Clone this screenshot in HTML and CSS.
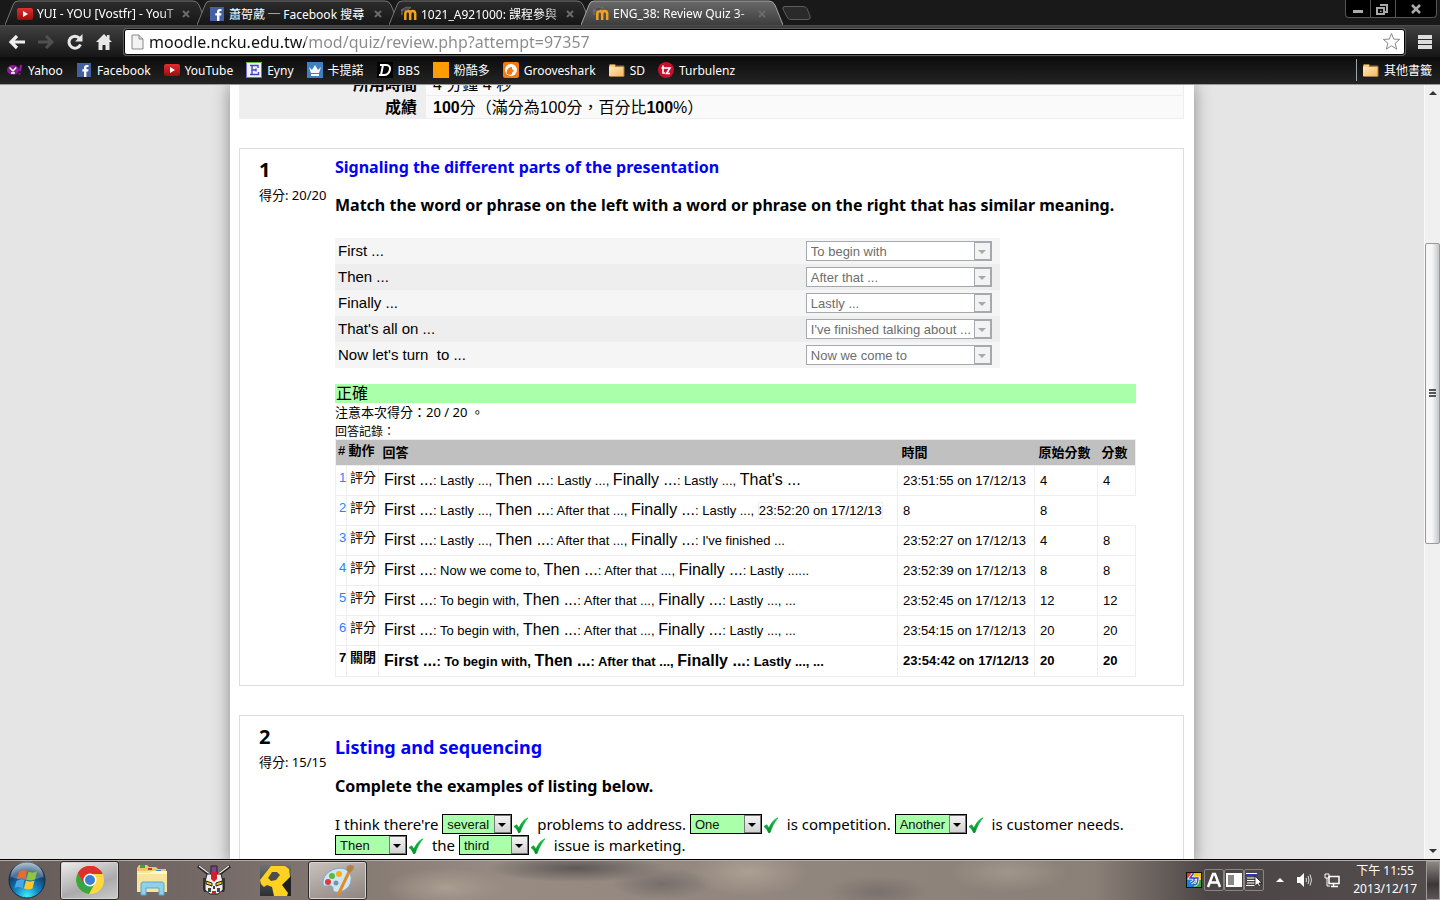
FILE: index.html
```html
<!DOCTYPE html>
<html lang="zh-Hant">
<head>
<meta charset="utf-8">
<title>ENG_38: Review Quiz 3</title>
<link rel="stylesheet" href="styles.css">
</head>
<body>
<svg class="defs" width="0" height="0" aria-hidden="true">
  <defs>
    <linearGradient id="gTab" x1="0" y1="0" x2="0" y2="1"><stop offset="0" stop-color="#2c2c2c"/><stop offset="1" stop-color="#161616"/></linearGradient>
    <linearGradient id="gActive" x1="0" y1="0" x2="0" y2="1"><stop offset="0" stop-color="#6a6a6a"/><stop offset="1" stop-color="#3d3d3d"/></linearGradient>
    <linearGradient id="gRed" x1="0" y1="0" x2="0" y2="1"><stop offset="0" stop-color="#e02f2f"/><stop offset="1" stop-color="#9c0d0d"/></linearGradient>
    <linearGradient id="gFolder" x1="0" y1="0" x2="1" y2="1"><stop offset="0" stop-color="#ffe9b8"/><stop offset="1" stop-color="#f5b95f"/></linearGradient>
    <radialGradient id="gOrb" cx=".5" cy=".95" r=".95"><stop offset="0" stop-color="#3ff0ff"/><stop offset=".35" stop-color="#1287c4"/><stop offset=".7" stop-color="#123f6d"/><stop offset="1" stop-color="#9fb8c8"/></radialGradient>
    <linearGradient id="gP" x1="0" y1="0" x2="0" y2="1"><stop offset="0" stop-color="#6d6f70"/><stop offset="1" stop-color="#2c2f31"/></linearGradient>
    <linearGradient id="gTick" x1="0" y1="0" x2="0" y2="1"><stop offset="0" stop-color="#17c34a"/><stop offset="1" stop-color="#008f25"/></linearGradient>
    <symbol id="youtube" viewBox="0 0 16 16"><rect y="2" width="16" height="12" rx="2" fill="url(#gRed)"/><path d="M6 5l5 3-5 3z" fill="#fff"/></symbol>
    <symbol id="facebook" viewBox="0 0 16 16"><rect x="1" y="1" width="14" height="14" fill="#4460a0"/><path d="M8 15V9.500H6.300V7.300H8V5.800C8 3.900 9.200 3 10.800 3h1.700v2.100h-1.100c-.8 0-1 .4-1 1v1.200h2.100l-.3 2.200h-1.800V15z" fill="#fff"/></symbol>
    <symbol id="moodle" viewBox="0 0 16 16"><path d="M4.300 14V8M9.200 14V8q0-3-2.400-3T4.300 8M9.200 8q0-3 2.500-3t2.500 3v6" fill="none" stroke="#f7a01c" stroke-width="2.500"/><path d="M0 4l5-3 5 .5L6 4.500z" fill="#4a4a4a" stroke="#808080" stroke-width=".6"/><path d="M1 4v5" stroke="#808080"/></symbol>
    <symbol id="folder" viewBox="0 0 16 16"><path d="M0 3l1-1h5l1 1.500h7.500l1 1V14l-1 1H1l-1-1z" fill="#a87942"/><path d="M0 5h14.500v9H0z" fill="url(#gFolder)"/><path d="M1 3h5v2H0z" fill="#f9cd83"/></symbol>
    <symbol id="tick" viewBox="0 0 16 16"><path d="M1 9.500L3.600 7.800 6 11C8 6 11 2.500 15 .8 11.500 5 9 9.500 7 15.500L5.500 15.700C4.500 13 3 10.800 1 9.500z" fill="url(#gTick)" stroke="url(#gTick)" stroke-width=".8"/></symbol>
  </defs>
</svg>

<header class="browser">
  <nav class="tabs" aria-label="Tabs">
    <div class="tab"><svg class="shape" viewBox="0 0 202 25" preserveAspectRatio="none"><path d="M0 25L8 5Q9 1 13 1H188Q192 1 194 5L202 25" fill="url(#gTab)" stroke="#757575"/></svg><svg class="ico"><use href="#youtube"/></svg><span class="tab-name">YUI - YOU [Vostfr] - YouT</span><button class="close" aria-label="Close"><svg width="8" height="8" viewBox="0 0 8 8"><path d="M1 1l6 6M7 1L1 7"/></svg></button></div>
    <div class="tab"><svg class="shape" viewBox="0 0 202 25" preserveAspectRatio="none"><path d="M0 25L8 5Q9 1 13 1H188Q192 1 194 5L202 25" fill="url(#gTab)" stroke="#757575"/></svg><svg class="ico"><use href="#facebook"/></svg><span class="tab-name whole">蕭哿葳 ─ Facebook 搜尋</span><button class="close" aria-label="Close"><svg width="8" height="8" viewBox="0 0 8 8"><path d="M1 1l6 6M7 1L1 7"/></svg></button></div>
    <div class="tab"><svg class="shape" viewBox="0 0 202 25" preserveAspectRatio="none"><path d="M0 25L8 5Q9 1 13 1H188Q192 1 194 5L202 25" fill="url(#gTab)" stroke="#757575"/></svg><svg class="ico"><use href="#moodle"/></svg><span class="tab-name">1021_A921000: 課程參與</span><button class="close" aria-label="Close"><svg width="8" height="8" viewBox="0 0 8 8"><path d="M1 1l6 6M7 1L1 7"/></svg></button></div>
    <div class="tab active"><svg class="shape" viewBox="0 0 202 25" preserveAspectRatio="none"><path d="M0 25L8 5Q9 1 13 1H188Q192 1 194 5L202 25" fill="url(#gActive)" stroke="#a5a5a5"/></svg><svg class="ico"><use href="#moodle"/></svg><span class="tab-name">ENG_38: Review Quiz 3-</span><button class="close" aria-label="Close"><svg width="8" height="8" viewBox="0 0 8 8"><path d="M1 1l6 6M7 1L1 7"/></svg></button></div>
    <button class="new-tab" aria-label="New tab"><svg width="32" height="16" viewBox="0 0 32 16"><path d="M4 1.500H22Q25 1.500 26 3.500L29 11Q30 14.500 27 14.500H10Q7 14.500 6 12L2 4Q1 1.500 4 1.500z" fill="#2a2a2a" stroke="#5c5c5c"/></svg></button>
    <div class="win">
      <button aria-label="Minimize"><svg width="24" height="16" viewBox="0 0 24 16"><path d="M7 9h10v3H7z" fill="#aaa"/></svg></button>
      <button aria-label="Restore"><svg width="24" height="16" viewBox="0 0 24 16"><path d="M9 4h7v7h-2M6 7h7v6H6z" fill="none" stroke="#aaa" stroke-width="2"/><path d="M9 9.500h1.500V11H9z" fill="#aaa"/></svg></button>
      <button class="wide" aria-label="Close window"><svg width="40" height="16" viewBox="0 0 40 16"><path d="M16 4l8 8M24 4l-8 8" stroke="#aaa" stroke-width="2.500"/></svg></button>
    </div>
  </nav>
  <div class="toolbar">
    <button class="tool" aria-label="Back"><svg width="18" height="18" viewBox="0 0 18 18"><path d="M9 3L3 9l6 6M3.500 9H17" fill="none" stroke="#eee" stroke-width="3.200"/></svg></button>
    <button class="tool" aria-label="Forward"><svg width="18" height="18" viewBox="0 0 18 18"><path d="M9 3l6 6-6 6M14.500 9H1" fill="none" stroke="#505050" stroke-width="3"/></svg></button>
    <button class="tool" aria-label="Reload"><svg width="18" height="18" viewBox="0 0 18 18"><path d="M13.500 5.200A6 6 0 1 0 14.500 11.500" fill="none" stroke="#e8e8e8" stroke-width="3"/><path d="M16.500 1v7.500H9z" fill="#e8e8e8"/></svg></button>
    <button class="tool" aria-label="Home"><svg width="18" height="18" viewBox="0 0 18 18"><path d="M9 1L1 9h2.500v8H7.500v-5h3v5h4V9H17L14.500 6.500V2H12v2z" fill="#e8e8e8"/></svg></button>
    <label class="address">
      <svg width="13" height="16" viewBox="0 0 13 16"><path d="M1 1h7l4 4v10H1z" fill="#f3f3f3" stroke="#888"/><path d="M8 1v4h4" fill="#ddd" stroke="#888"/></svg>
      <input type="text" aria-label="Address" value="moodle.ncku.edu.tw/mod/quiz/review.php?attempt=97357">
      <svg width="19" height="19" viewBox="0 0 19 19"><path d="M9.500 1.500l2.200 5.600 6 .3-4.600 3.800 1.600 5.900-5.200-3.300-5.200 3.300 1.600-5.900L1.300 7.400l6-.3z" fill="#fff" stroke="#888" stroke-linejoin="round"/></svg>
    </label>
    <button class="tool menu" aria-label="Menu"><svg width="14" height="16" viewBox="0 0 14 16"><path d="M0 3h14M0 8h14M0 13h14" stroke="#ddd" stroke-width="4"/></svg></button>
  </div>
  <nav class="bookmarks" aria-label="Bookmarks">
    <a href="#"><svg class="ico" viewBox="0 0 16 16"><ellipse cx="6" cy="8" rx="6" ry="5" fill="#8a1a97"/><path d="M2.500 5.500L6 9l3.200-3.500M6 8.500V11M4 11h4" fill="none" stroke="#fff" stroke-width="1.500"/><path d="M14 3l-1 6M12.500 11v1.600" stroke="#a11bb0" stroke-width="2"/></svg>Yahoo</a>
    <a href="#"><svg class="ico"><use href="#facebook"/></svg>Facebook</a>
    <a href="#"><svg class="ico"><use href="#youtube"/></svg>YouTube</a>
    <a href="#"><svg class="ico" viewBox="0 0 16 16"><path d="M0 0h16v16H0z" fill="#6a6fe0"/><path d="M0 0h16v1H0z" fill="#6bbd38"/><path d="M1 1h14v14H1z" fill="#f3f3ff"/><path d="M4 3.500h8V6M6 3.500v9M4 12.500h8.500V10M6 8h4M10 6.500v3" fill="none" stroke="#4348b8" stroke-width="1.400"/></svg>Eyny</a>
    <a href="#"><svg class="ico" viewBox="0 0 16 16"><path d="M0 0h16v16H0z" fill="#3d80c4"/><path d="M2 5l3 3 3-5 3 5 3-3-2 6H4zM4 12h8v2H4z" fill="#fff"/></svg>卡提諾</a>
    <a href="#"><svg class="ico" viewBox="0 0 16 16"><path d="M0 0h16v16H0z" fill="#000"/><path d="M3 3h6c7 0 4 10-2 10H2M6 3L4 13" fill="none" stroke="#fff" stroke-width="2"/></svg>BBS</a>
    <a href="#"><svg class="ico" viewBox="0 0 16 16"><path d="M0 0h16v16H0z" fill="#ff9d00"/></svg>粉酷多</a>
    <a href="#"><svg class="ico" viewBox="0 0 16 16"><rect width="16" height="16" rx="2" fill="#f47b14"/><circle cx="8" cy="8" r="6" fill="#fff"/><path d="M3.500 11C4 6 7 5 9 5c-.5 2 1 3.500 3 4-2 0-3 1-3 3-2 1.500-4 1-5.500-1z" fill="#f47b14"/></svg>Grooveshark</a>
    <a href="#"><svg class="ico"><use href="#folder"/></svg>SD</a>
    <a href="#"><svg class="ico" viewBox="0 0 16 16"><circle cx="8" cy="8" r="8" fill="#c8102e"/><path d="M5 3.500v7.500h2M3.500 6H12L8.500 11.500H12" fill="none" stroke="#fff" stroke-width="1.600"/></svg>Turbulenz</a>
    <a class="other" href="#"><svg class="ico"><use href="#folder"/></svg>其他書籤</a>
  </nav>
</header>

<div class="view">
  <main class="scroller">
    <article class="page">
      <div class="summary-wrap">
        <table class="summary">
          <tr><th scope="row">所用時間</th><td>4 分鐘 4 秒</td></tr>
          <tr><th scope="row">成績</th><td><b>100</b>分（滿分為100分，百分比<b>100</b>%）</td></tr>
        </table>
      </div>

      <section class="question">
        <div class="info"><h2>1</h2><p>得分: 20/20</p></div>
        <div class="content">
          <h3>Signaling the different parts of the presentation</h3>
          <p class="prompt">Match the word or phrase on the left with a word or phrase on the right that has similar meaning.</p>
          <table class="match">
            <tr><td><label for="m1">First ...</label></td><td><span class="drop off"><select id="m1" disabled><option>To begin with</option></select></span></td></tr>
            <tr><td><label for="m2">Then ...</label></td><td><span class="drop off"><select id="m2" disabled><option>After that ...</option></select></span></td></tr>
            <tr><td><label for="m3">Finally ...</label></td><td><span class="drop off"><select id="m3" disabled><option>Lastly ...</option></select></span></td></tr>
            <tr><td><label for="m4">That's all on ...</label></td><td><span class="drop off"><select id="m4" disabled><option>I've finished talking about ...</option></select></span></td></tr>
            <tr><td><label for="m5">Now let's turn &nbsp;to ...</label></td><td><span class="drop off"><select id="m5" disabled><option>Now we come to</option></select></span></td></tr>
          </table>
          <div class="correct">正確</div>
          <p class="note">注意本次得分：20 / 20 。</p>
          <p class="log-title">回答記錄：</p>
          <table class="log">
            <colgroup><col class="c-num"><col class="c-act"><col><col class="c-time"><col class="c-raw"><col class="c-mark"></colgroup>
            <thead><tr><th>#</th><th>動作</th><th>回答</th><th>時間</th><th>原始分數</th><th>分數</th></tr></thead>
            <tbody>
              <tr><td><a href="#">1</a></td><td>評分</td><td><big>First ...</big>: Lastly ..., <big>Then ...</big>: Lastly ..., <big>Finally ...</big>: Lastly ..., <big>That's ...</big></td><td>23:51:55 on 17/12/13</td><td>4</td><td>4</td></tr>
              <tr><td><a href="#">2</a></td><td>評分</td><td><big>First ...</big>: Lastly ..., <big>Then ...</big>: After that ..., <big>Finally ...</big>: Lastly ..., <span class="stray">23:52:20 on 17/12/13</span></td><td>8</td><td>8</td></tr>
              <tr><td><a href="#">3</a></td><td>評分</td><td><big>First ...</big>: Lastly ..., <big>Then ...</big>: After that ..., <big>Finally ...</big>: I've finished ...</td><td>23:52:27 on 17/12/13</td><td>4</td><td>8</td></tr>
              <tr><td><a href="#">4</a></td><td>評分</td><td><big>First ...</big>: Now we come to, <big>Then ...</big>: After that ..., <big>Finally ...</big>: Lastly ......</td><td>23:52:39 on 17/12/13</td><td>8</td><td>8</td></tr>
              <tr><td><a href="#">5</a></td><td>評分</td><td><big>First ...</big>: To begin with, <big>Then ...</big>: After that ..., <big>Finally ...</big>: Lastly ..., ...</td><td>23:52:45 on 17/12/13</td><td>12</td><td>12</td></tr>
              <tr><td><a href="#">6</a></td><td>評分</td><td><big>First ...</big>: To begin with, <big>Then ...</big>: After that ..., <big>Finally ...</big>: Lastly ..., ...</td><td>23:54:15 on 17/12/13</td><td>20</td><td>20</td></tr>
              <tr class="last"><td>7</td><td>關閉</td><td><big>First ...</big>: To begin with, <big>Then ...</big>: After that ..., <big>Finally ...</big>: Lastly ..., ...</td><td>23:54:42 on 17/12/13</td><td>20</td><td>20</td></tr>
            </tbody>
          </table>
        </div>
      </section>

      <section class="question second">
        <div class="info"><h2>2</h2><p>得分: 15/15</p></div>
        <div class="content">
          <h3>Listing and sequencing</h3>
          <p class="prompt">Complete the examples of listing below.</p>
          <p class="cloze">I think there're <span class="drop on short"><select aria-label="Gap 1"><option>several</option></select></span><svg class="tick"><use href="#tick"/></svg> problems to address. <span class="drop on"><select aria-label="Gap 2"><option>One</option></select></span><svg class="tick"><use href="#tick"/></svg> is competition. <span class="drop on"><select aria-label="Gap 3"><option>Another</option></select></span><svg class="tick"><use href="#tick"/></svg> is customer needs.<br><span class="drop on"><select aria-label="Gap 4"><option>Then</option></select></span><svg class="tick"><use href="#tick"/></svg> the <span class="drop on short"><select aria-label="Gap 5"><option>third</option></select></span><svg class="tick"><use href="#tick"/></svg> issue is marketing.</p>
        </div>
      </section>
    </article>
  </main>
  <div class="scrollbar" aria-hidden="true">
    <span class="arrow up"></span><span class="before"></span><span class="thumb"><i></i><i></i><i></i></span><span class="after"></span><span class="arrow down"></span>
  </div>
</div>

<footer class="taskbar">
  <button class="start" aria-label="Start"><svg width="38" height="38" viewBox="0 0 38 38"><circle cx="19" cy="19" r="18" fill="url(#gOrb)" stroke="#152b3c"/><path d="M3 16a16 16 0 0 1 32 0Q19 22 3 16z" fill="#fff" opacity=".25"/><path d="M11 11q4-3 8-1l-2 8q-4-2-8 0z" fill="#ee6a28"/><path d="M20.500 10.500q4 2 8.500 0l-2 8q-4 2-8.500 0z" fill="#8ec63f"/><path d="M8.500 20q4-3 8-1l-2 8q-4-2-8 0z" fill="#4ba6e6"/><path d="M18 19.500q4 2 8.500 0l-2 8q-4 2-8.500 0z" fill="#fcc72c"/></svg></button>
  <button class="task open bright" aria-label="Chrome"><svg width="30" height="30" viewBox="0 0 30 30"><circle cx="15" cy="15" r="14" fill="#ffd93b"/><path d="M15 15L2.900 8A14 14 0 0 1 27.600 9H15z" fill="#d93025"/><path d="M2.900 8A14 14 0 0 0 14 29l6-11-5-3z" fill="#3ba447"/><path d="M2.900 8L9 18.500l6-9.500h12.600A14 14 0 0 0 2.900 8z" fill="#db3327"/><circle cx="15" cy="15" r="6.500" fill="#fff"/><circle cx="15" cy="15" r="5" fill="#3b7fd0"/></svg></button>
  <button class="task" aria-label="Explorer"><svg width="34" height="32" viewBox="0 0 34 32"><path d="M2 4l2-3h8l2 2h7l2 2h8v23H2z" fill="#e8c96a"/><path d="M5 1h5v3H5z" fill="#3aa33a"/><path d="M13 4h4v2h-4z" fill="#c53a2a"/><path d="M21 6h5v2h-5z" fill="#3a8ad8"/><path d="M2 7h30v21H2z" fill="#f7e59c"/><path d="M2 9h13l3-2h14v3H2z" fill="#fff6cf"/><path d="M6 31V20q0-2 2-2h19q2 0 2 2v11h-5v-7H11v7z" fill="#8fd0ec" stroke="#5aa7cf"/></svg></button>
  <button class="task" aria-label="Gundam"><svg width="34" height="32" viewBox="0 0 34 32"><path d="M1 2l12 9M33 2l-12 9" stroke="#222" stroke-width="3"/><path d="M2 2l12 9M32 2l-12 9" stroke="#eee" stroke-width="1.200"/><path d="M6 14h5v14H7l-1-3zM28 14h-5v14h4l1-3z" fill="#333"/><path d="M10 10h14l2 8v8l-5 4h-8l-5-4v-8z" fill="#eee" stroke="#222"/><path d="M14 2h6v8h-6z" fill="#7c4496" stroke="#222"/><path d="M14 8h6v7l-3 3-3-3z" fill="#d5202c"/><path d="M9 17l6 2v3l-6-2zM25 17l-6 2v3l6-2z" fill="#f1c40f" stroke="#222"/><path d="M11 24h3v4h-3zM20 24h3v4h-3zM16 22h2v3h-2z" fill="#444"/><path d="M15 27h4v3h-4z" fill="#d5202c"/></svg></button>
  <button class="task" aria-label="PPS"><svg width="31" height="31" viewBox="0 0 31 31"><path d="M0 0h31v31H0z" fill="url(#gP)"/><path d="M20 20l11-9v20H20z" fill="#1d1f20"/><path d="M11 1h14l4 3 1 8-8 8 6 8-1 3H14l-2-9-5-2-3 2-3-3-1-4z" fill="#ffd21f"/><path d="M12 7h5l3 3-4 5-5 1-3-3z" fill="#4c4e4d"/></svg></button>
  <button class="task open" aria-label="Paint"><svg width="34" height="32" viewBox="0 0 34 32"><path d="M14 5c9-3 18 2 16 12-1 8-10 12-16 11-4-1 0-5-4-6S3 24 2 20C1 13 7 7 14 5z" fill="#cfe6f5" stroke="#78a9c9"/><circle cx="7" cy="18" r="3" fill="#e0393b"/><circle cx="11" cy="12" r="3" fill="#59b947"/><circle cx="18" cy="10" r="3" fill="#f5b11c"/><circle cx="15" cy="19" r="2.500" fill="#7895a7"/><path d="M28 8L17 31" stroke="#e88a23" stroke-width="3"/><path d="M26 7q-2-5 3-6l4 1q0 5-5 7z" fill="#b47f4d"/></svg></button>
  <div class="tray">
    <button aria-label="Input method"><svg width="16" height="16" viewBox="0 0 16 16"><path d="M0 0h16v16H0z" fill="#111"/><path d="M1 1h7v7H1z" fill="#e53a1d"/><path d="M8 1h7v7H8z" fill="#ffc400"/><path d="M1 8h7v7H1z" fill="#1d7ee0"/><path d="M8 8h7v7H8z" fill="#35a635"/><path d="M7 2L4 6h8c0 5-1 7-4 7M8 6v3L5 11" fill="none" stroke="#fff" stroke-width="3"/><path d="M7 2L4 6h8c0 5-1 7-4 7M8 6v3L5 11" fill="none" stroke="#2740c8" stroke-width="1.300"/></svg></button>
    <button class="box" aria-label="Alphanumeric"><svg width="16" height="16" viewBox="0 0 16 16"><path d="M2 15L7 2h2l5 13M4 10.500h8" fill="none" stroke="#fff" stroke-width="2.500"/></svg></button>
    <button class="box" aria-label="Half width"><svg width="16" height="16" viewBox="0 0 16 16"><path d="M0 1h16v14H0z" fill="#fff"/><path d="M2 3h6v10H2z" fill="#888"/></svg></button>
    <button class="box" aria-label="Options"><svg width="16" height="16" viewBox="0 0 16 16"><path d="M0 2h11v2H0z" fill="#2a35c0"/><path d="M0 1.500h11M1 6h9M1 8.500h8M1 11h9M0 13.500h10" stroke="#fff"/><path d="M9 4v10l2.500-2 1.500 3 1.500-1-1.500-3H16z" fill="#fff" stroke="#111" stroke-width=".8"/></svg></button>
    <button class="gap" aria-label="Show hidden icons"><svg width="8" height="6" viewBox="0 0 8 6"><path d="M4 1l4 4H0z" fill="#fff"/></svg></button>
    <button class="gap" aria-label="Volume"><svg width="16" height="16" viewBox="0 0 16 16"><path d="M1 5h3l4-4v14l-4-4H1z" fill="#fff"/><path d="M10 6q1 2 0 4M12 4q2 4 0 8M14 2.500q3 5.500 0 11" fill="none" stroke="#ddd"/></svg></button>
    <button class="gap" aria-label="Network"><svg width="16" height="16" viewBox="0 0 16 16"><path d="M5 4.500h10v7H5zM9.500 12v2M7 14.500h7" fill="none" stroke="#fff" stroke-width="1.500"/><path d="M1 2v4h4V2M2 1v2M4 1v2M3 6v8h3" fill="none" stroke="#fff"/></svg></button>
    <time class="clock">下午 11:55<br>2013/12/17</time>
    <button class="desktop" aria-label="Show desktop"></button>
  </div>
</footer>
</body>
</html>
```
FILE: styles.css
```css
*, *::before, *::after { box-sizing: border-box; }

body {
  margin: 0;
  height: 100vh;
  display: flex;
  flex-direction: column;
  overflow: hidden;
  font-family: "Noto Sans", "Noto Sans CJK TC", sans-serif;
  font-size: 12px;
  color: #000;
}

h2, h3, p { margin: 0; }
button { border: 0; padding: 0; background: none; font: inherit; color: inherit; }
button svg { display: block; }
table { border-collapse: collapse; }
.defs { position: absolute; }
.ico { width: 16px; height: 16px; flex: none; }

/* Browser frame */
.browser { flex: none; background: #191919; color: #fff; border-bottom: 1px solid #999; }

.tabs { display: flex; height: 25px; padding-left: 5px; background: #191919; }
.tab {
  position: relative;
  display: flex;
  align-items: center;
  flex: none;
  width: 202px;
  height: 25px;
  margin-right: -10px;
  padding: 2px 17px 0 12px;
}
.tab.active { z-index: 1; }
.tab .shape { position: absolute; inset: 0; width: 100%; height: 100%; }
.tab .ico, .tab-name, .close { position: relative; }
.tab-name {
  flex: 1;
  margin-left: 4px;
  white-space: nowrap;
  -webkit-mask-image: linear-gradient(90deg, #000 85%, #0004);
  mask-image: linear-gradient(90deg, #000 85%, #0004);
}
.tab-name.whole { -webkit-mask-image: none; mask-image: none; }
.close path { fill: none; stroke: #6a6a6a; stroke-width: 2; }
.new-tab { margin-left: 8px; }
.win { display: flex; align-self: flex-start; margin-left: auto; margin-right: 3px; background: #000; border: 1px solid #555; border-top: 0; border-radius: 0 0 4px 4px; }
.win button { height: 17px; }
.win button + button { border-left: 1px solid #555; }

.toolbar {
  display: flex;
  align-items: center;
  height: 32px;
  padding: 0 8px 0 8px;
  background: linear-gradient(#404040, #161616);
  border-top: 1px solid #4c4c4c;
}
.tool { width: 18px; margin-right: 11px; }
.tool.menu { width: 14px; margin: 0 0 0 13px; }
.address {
  flex: 1;
  display: flex;
  align-items: center;
  height: 26px;
  padding: 0 3px 0 6px;
  background: #fff;
  border: 1px solid #000;
  border-radius: 3px;
  box-shadow: 0 0 0 1px #5c5c5c;
}
.address input {
  flex: 1;
  min-width: 0;
  margin-left: 5px;
  padding: 0;
  border: 0;
  font: 16px/24px "Noto Sans", sans-serif;
  background: linear-gradient(90deg, #111 156px, #8a8a8a 156px);
  -webkit-background-clip: text;
  background-clip: text;
  -webkit-text-fill-color: transparent;
}

.bookmarks {
  display: flex;
  align-items: center;
  gap: 13px;
  height: 27px;
  padding: 0 8px 1px 7px;
  background: linear-gradient(#0c0c0c, #242424);
}
.bookmarks a { display: flex; align-items: center; gap: 5px; color: #fff; text-decoration: none; }
.bookmarks .other { margin-left: auto; height: 22px; padding-left: 6px; border-left: 1px solid #9aa4ac; }

/* Page viewport */
.view { flex: 1; min-height: 0; display: flex; background: #e5e5e5; }
.scroller { flex: 1; overflow: hidden; }
.page {
  max-width: 964px;
  min-height: 100%;
  margin: 0 auto;
  padding: 0 10px 0 9px;
  background: #fff;
  box-shadow: 0 0 16px #888;
}

.summary-wrap { height: 34px; display: flex; align-items: flex-end; overflow: hidden; }
.summary { width: 100%; font: 16px/20px "Liberation Sans", "Noto Sans CJK TC", sans-serif; }
.summary th, .summary td { padding: 2px 8px 0 7px; border: 1px solid #eee; height: 23px; }
.summary th { width: 186px; background: #eee; text-align: right; }
.summary td { background: #fafafa; }

.question { display: flex; margin-top: 29px; border: 1px solid #ddd; padding: 8px 47px 8px 19px; }
.info { width: 76px; flex: none; white-space: nowrap; }
.info h2 { font-size: 20px; line-height: 25px; }
.info p { font-size: 13px; line-height: 26px; }
.content { flex: 1; min-width: 0; }
.content h3 { font-size: 16px; line-height: 20px; color: #00f; }
.prompt { margin-top: 18px; font-size: 16px; line-height: 20px; font-weight: 700; }

.match { width: 83%; margin: 23px 0 16px; font: 15px/20px "Liberation Sans", sans-serif; }
.match tr { background: #f5f5f5; }
.match tr:nth-child(even) { background: #eee; }
.match td { padding: 3px; }
.match td + td { width: 194px; padding: 3px 8px 3px 0; }

.drop { position: relative; display: inline-block; width: 72px; height: 20px; vertical-align: top; }
.drop.short { width: 70px; }
.drop.off { width: 186px; }
.drop select {
  appearance: none;
  display: block;
  width: 100%;
  height: 20px;
  padding: 1px 18px 0 4px;
  border: 1px solid #a5a8ad;
  border-radius: 0;
  background: #fff;
  color: #6d6d6d;
  opacity: 1;
  font: 13px/18px "Liberation Sans", sans-serif;
}
.drop.on select { background: #afa; border-color: #000; color: #111; }
.drop::before {
  content: "";
  position: absolute;
  top: 1px;
  right: 1px;
  width: 17px;
  height: 18px;
  border: 1px solid #a5a8ad;
  background: #f3f3f3;
}
.drop.on::before { border-color: #777; background: linear-gradient(#f4f4f4, #d2d2d2); }
.drop::after {
  content: "";
  position: absolute;
  top: 9px;
  right: 6px;
  border: 4px solid transparent;
  border-top-color: #a5a8ad;
  border-bottom: 0;
}
.drop.on::after { border-top-color: #000; }

.correct { background: #afa; font-size: 16px; line-height: 19px; padding-left: 1px; }
.note { font-size: 13px; line-height: 18px; }
.log-title { padding-top: 3px; line-height: 15px; }

.log { width: 100%; table-layout: fixed; font: 13px/20px "Liberation Sans", "Noto Sans CJK TC", sans-serif; }
.c-num { width: 11px; }
.c-act { width: 32px; }
.c-time { width: 137px; }
.c-raw { width: 63px; }
.c-mark { width: 38px; }
.log th { height: 26px; padding: 0 4px; background: #c0c0c0; text-align: left; white-space: nowrap; font-size: 13px; }
.log thead { border: 1px solid #eee; }
.log td { height: 30px; padding: 0 5px; border: 1px solid #eee; white-space: nowrap; }
.log tr > :nth-child(-n+2) { padding: 2px 0 0 3px; vertical-align: top; }
.log th:nth-child(n+1):nth-child(-n+2) { padding: 1px 0 0 2px; }
.log a { color: #2a7fff; text-decoration: none; }
.log big { font-size: 16px; }
.log .last { font-weight: 700; }
.log .last td { height: 31px; }
.stray { border: 1px solid #eee; }

.second h3 { margin-top: 11px; font-size: 18px; line-height: 24px; }
.second .prompt { margin-top: 17px; }
.cloze { margin-top: 18px; font-size: 15px; line-height: 21px; white-space: nowrap; }
.tick { width: 16px; height: 16px; margin: 3px 4px 0 1px; vertical-align: top; }

/* Scroll bar */
.scrollbar { width: 16px; display: flex; flex-direction: column; background: #f0f0f0; border-left: 1px solid #fafafa; }
.arrow { height: 16px; display: flex; align-items: center; justify-content: center; }
.arrow::before { content: ""; border: 4px solid transparent; }
.up::before { border-bottom-color: #333; border-top: 0; }
.down::before { border-top-color: #333; border-bottom: 0; }
.before { flex: 142; }
.thumb {
  flex: 300;
  display: flex;
  flex-direction: column;
  align-items: center;
  justify-content: center;
  gap: 1px;
  border: 1px solid #999;
  border-radius: 2px;
  background: linear-gradient(90deg, #f7f7f7 45%, #c4c6c9);
}
.thumb i { width: 7px; height: 2px; background: #555; }
.after { flex: 300; }

/* Task bar */
.taskbar {
  flex: none;
  display: flex;
  align-items: center;
  height: 41px;
  padding-left: 8px;
  border-top: 1px solid #000;
  box-shadow: inset 0 1px 0 #b4aca8;
  color: #fff;
  background:
    radial-gradient(ellipse 90px 14px at 40% 20%, #5f5858, transparent),
    radial-gradient(ellipse 60px 20px at 31% 70%, #aa9e92, transparent),
    radial-gradient(ellipse 50px 16px at 46% 60%, #776e6b, transparent),
    radial-gradient(ellipse 60px 24px at 52% 30%, #aca093, transparent),
    radial-gradient(ellipse 50px 16px at 61% 80%, #7a706c, transparent),
    radial-gradient(ellipse 60px 20px at 70% 30%, #a19689, transparent),
    linear-gradient(90deg, #655c5a, #756a66 15%, #978b82 35%, #8b8078 76%, #4b4545 84%, #544d4d);
}
.start { margin-right: 14px; }
.task { display: flex; align-items: center; justify-content: center; width: 59px; height: 39px; margin-right: 3px; }
.task.open { border: 1px solid #2e2a2a; border-radius: 3px; box-shadow: inset 0 0 0 1px #d8d2cf; background: linear-gradient(160deg, #c9c2bd, #8d837e); }
.task.bright { background: linear-gradient(160deg, #eee, #aaa 60%, #ccc); }
.tray { margin-left: auto; display: flex; align-items: center; height: 100%; }
.tray .box { display: flex; align-items: center; justify-content: center; width: 20px; height: 22px; border: 1px solid #8b8583; border-radius: 2px; }
.tray > button:first-child { margin-right: 2px; }
.gap { margin-left: 12px; }
.clock { margin: 0 9px 0 13px; text-align: center; line-height: 18px; }
.desktop { width: 14px; height: 39px; border: 1px solid #a09a98; background: linear-gradient(#8d8785, #3c3838 60%, #5c5656); }
```
